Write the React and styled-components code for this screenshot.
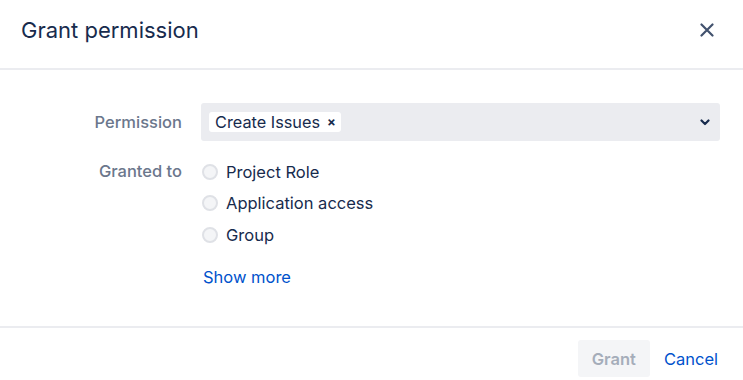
import React, { useState } from "react";
import styled, { createGlobalStyle } from "styled-components";

const GlobalStyle = createGlobalStyle`
  body {
    margin: 0;
    background: #fff;
    font-family: Inter, "Liberation Sans", sans-serif;
    -webkit-font-smoothing: antialiased;
  }
`;

const Dialog = styled.div`
  width: 743px;
  height: 380px;
  display: flex;
  flex-direction: column;
  background: #fff;
  color: #172b4d;
`;

const Header = styled.header`
  height: 70px;
  box-sizing: border-box;
  flex-shrink: 0;
  display: flex;
  align-items: center;
  justify-content: space-between;
  padding: 0 28px 8px 21px;
  border-bottom: 2px solid #ebecf0;
`;

const Title = styled.h1`
  margin: 0;
  font-size: 22px;
  font-weight: 400;
  color: #172b4d;
`;

const CloseButton = styled.button`
  border: 0;
  background: none;
  padding: 0;
  width: 16px;
  height: 16px;
  display: flex;
  align-items: center;
  justify-content: center;
  cursor: pointer;
`;

const Body = styled.div`
  flex: 1;
  padding: 33px 23px 0 0;
`;

const Form = styled.div`
  display: grid;
  grid-template-columns: 182px 1fr;
  column-gap: 19px;
  row-gap: 15px;
`;

const Label = styled.div`
  text-align: right;
  font-size: 16.5px;
  font-weight: 500;
  color: #6b778c;
  line-height: ${(p) => p.$lh || "38px"};
`;

const Select = styled.div`
  height: 38px;
  background: #ebecf0;
  border-radius: 3px;
  display: flex;
  align-items: center;
  justify-content: space-between;
  padding: 0 10px 0 8px;
`;

const Tag = styled.span`
  display: inline-flex;
  align-items: center;
  gap: 7px;
  height: 20px;
  padding: 0 5px 0 6px;
  background: #fff;
  border-radius: 3px;
  font-size: 16.3px;
  color: #172b4d;
`;

const TagRemove = styled.span`
  font-size: 13px;
  font-weight: 700;
  line-height: 1;
`;

const Options = styled.div`
  display: flex;
  flex-direction: column;
`;

const Option = styled.label`
  display: flex;
  align-items: center;
  gap: 8px;
  height: 31.5px;
  font-size: 16.5px;
  color: #172b4d;
  cursor: pointer;
`;

const Radio = styled.span`
  width: 12px;
  height: 12px;
  border-radius: 50%;
  background: ${(p) => (p.$checked ? "#0052cc" : "#f4f5f7")};
  border: 2px solid ${(p) => (p.$checked ? "#0052cc" : "#dfe1e6")};
  margin-left: 1px;
  flex-shrink: 0;
`;

const ShowMore = styled.a`
  margin-top: 16px;
  margin-left: 2px;
  font-size: 16.5px;
  color: #0052cc;
  text-decoration: none;
  cursor: pointer;
`;

const Footer = styled.footer`
  flex-shrink: 0;
  border-top: 2px solid #ebecf0;
  display: flex;
  justify-content: flex-end;
  align-items: center;
  gap: 14px;
  padding: 12px 25px 3px 0;
`;

const Button = styled.button`
  height: 37px;
  border: 0;
  border-radius: 3px;
  font-family: inherit;
  font-size: 16.5px;
  font-weight: ${(p) => (p.$link ? 400 : 600)};
  padding: ${(p) => (p.$link ? "0" : "0 14px")};
  background: ${(p) => (p.$link ? "transparent" : "#f4f5f7")};
  color: ${(p) => (p.$link ? "#0052cc" : "#a5adba")};
  cursor: ${(p) => (p.$disabled ? "not-allowed" : "pointer")};
`;

const options = ["Project Role", "Application access", "Group"];

const App = () => {
  const [selected, setSelected] = useState(null);

  return (
    <>
      <GlobalStyle />
      <Dialog>
        <Header>
          <Title>Grant permission</Title>
          <CloseButton aria-label="Close">
            <svg width="14" height="14" viewBox="0 0 14 14">
              <path
                d="M1.5 1.5 L12.5 12.5 M12.5 1.5 L1.5 12.5"
                stroke="#42526e"
                strokeWidth="2.2"
                strokeLinecap="round"
              />
            </svg>
          </CloseButton>
        </Header>
        <Body>
          <Form>
            <Label>Permission</Label>
            <Select>
              <Tag>
                Create Issues
                <TagRemove>×</TagRemove>
              </Tag>
              <svg width="10" height="7" viewBox="0 0 10 7">
                <path
                  d="M1.5 1.5 L5 5 L8.5 1.5"
                  fill="none"
                  stroke="#172b4d"
                  strokeWidth="2.2"
                  strokeLinecap="round"
                  strokeLinejoin="round"
                />
              </svg>
            </Select>
            <Label $lh="31.5px">Granted to</Label>
            <Options>
              {options.map((o) => (
                <Option key={o} onClick={() => setSelected(o)}>
                  <Radio $checked={selected === o} />
                  {o}
                </Option>
              ))}
              <ShowMore>Show more</ShowMore>
            </Options>
          </Form>
        </Body>
        <Footer>
          <Button $disabled>Grant</Button>
          <Button $link>Cancel</Button>
        </Footer>
      </Dialog>
    </>
  );
};

export default App;
